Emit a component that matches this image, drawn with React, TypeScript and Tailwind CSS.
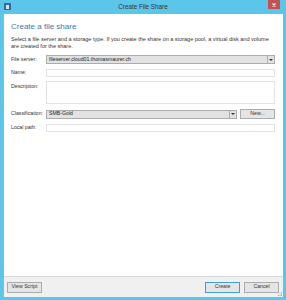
import React from "react";

const font = { fontFamily: '"Liberation Sans", Arial, sans-serif' };

function Label({ children, className = "" }: { children: React.ReactNode; className?: string }) {
  return <div className={`w-[35px] shrink-0 text-[5.2px] text-[#333] ${className}`}>{children}</div>;
}

function Combo({ value, className = "" }: { value: string; className?: string }) {
  return (
    <div className={`flex h-[9px] items-stretch border border-[#acacac] bg-[#e2e2e2] ${className}`}>
      <div className="flex flex-1 items-center pl-[2px] text-[5.2px] text-[#222]">{value}</div>
      <div className="flex w-[7px] items-center justify-center border-l border-[#acacac]">
        <svg width="4" height="2" viewBox="0 0 4 2">
          <path d="M0 0h4L2 2z" fill="#333" />
        </svg>
      </div>
    </div>
  );
}

function Button({ label, primary = false, className = "" }: { label: string; primary?: boolean; className?: string }) {
  return (
    <button
      className={`flex h-[11px] w-[35px] items-center justify-center border bg-[#e5e5e5] text-[5.2px] text-[#333] ${
        primary ? "border-[#3c9fe0]" : "border-[#acacac]"
      } ${className}`}
    >
      {label}
    </button>
  );
}

export default function App() {
  return (
    <div className="flex h-[300px] w-[286px] flex-col bg-[#5bc6ea]" style={font}>
      <div className="relative flex h-[14px] shrink-0 items-center justify-center">
        <div className="absolute left-[4px] top-[3px] flex h-[7px] w-[7px] items-center justify-center bg-[#3d6a8c]">
          <div className="h-[4px] w-[3px] bg-[#cfe2ee]" />
        </div>
        <span className="text-[6.3px] text-[#333]">Create File Share</span>
        <div className="absolute right-[6px] top-0 flex h-[9px] w-[12px] items-center justify-center bg-[#c75050]">
          <svg width="4" height="4" viewBox="0 0 4 4">
            <path d="M0.5 0.5l3 3M3.5 0.5l-3 3" stroke="#fff" strokeWidth="1.2" />
          </svg>
        </div>
      </div>
      <div className="mb-[3px] ml-[3px] mr-[3px] flex flex-1 flex-col border-l border-[#9fb3c0] bg-white">
        <div className="flex-1 pl-[7px] pr-[8px]">
          <div className="mt-[8px] text-[8px] leading-[10px] text-[#3b77b5]">Create a file share</div>
          <div className="mt-[4px] text-[5.5px] leading-[7px] text-[#333]">
            Select a file server and a storage type. If you create the share on a storage pool, a virtual disk and volume are created for the share.
          </div>
          <div className="mt-[5px] flex items-center">
            <Label>File server:</Label>
            <Combo value="fileserver.cloud01.thomasmaurer.ch" className="flex-1" />
          </div>
          <div className="mt-[5px] flex items-center">
            <Label>Name:</Label>
            <div className="h-[8px] flex-1 border border-[#e3e3e3]" />
          </div>
          <div className="mt-[4px] flex items-start">
            <Label className="mt-[2px]">Description:</Label>
            <div className="h-[23px] flex-1 border border-[#e3e3e3]" />
          </div>
          <div className="mt-[5px] flex items-center">
            <Label>Classification:</Label>
            <Combo value="SMB-Gold" className="flex-1" />
            <div className="ml-[3px] flex h-[10px] w-[35px] items-center justify-center border border-[#acacac] bg-[#e5e5e5] text-[5.2px] text-[#333]">
              New...
            </div>
          </div>
          <div className="mt-[5px] flex items-center">
            <Label>Local path:</Label>
            <div className="h-[8px] flex-1 border border-[#e3e3e3]" />
          </div>
        </div>
        <div className="relative flex h-[21px] shrink-0 items-center border-t border-[#d9d9d9] bg-[#f0f0f0] px-[3px]">
          <Button label="View Script" />
          <div className="flex-1" />
          <Button label="Create" primary />
          <Button label="Cancel" className="ml-[4px] mr-[1px]" />
          <svg className="absolute bottom-[1px] right-[1px]" width="4" height="4" viewBox="0 0 4 4">
            <rect x="3" y="0" width="1" height="1" fill="#b0b0b0" />
            <rect x="1.5" y="1.5" width="1" height="1" fill="#b0b0b0" />
            <rect x="3" y="1.5" width="1" height="1" fill="#b0b0b0" />
            <rect x="0" y="3" width="1" height="1" fill="#b0b0b0" />
            <rect x="1.5" y="3" width="1" height="1" fill="#b0b0b0" />
            <rect x="3" y="3" width="1" height="1" fill="#b0b0b0" />
          </svg>
        </div>
      </div>
    </div>
  );
}
